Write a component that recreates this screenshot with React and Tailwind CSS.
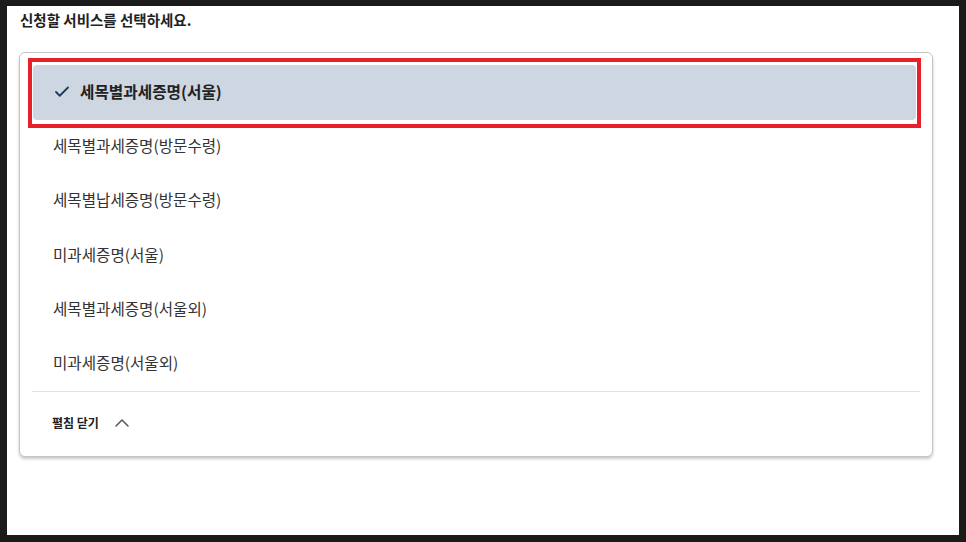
import React from 'react';
import { Check, ChevronUp } from 'lucide-react';

const items = [
  '세목별과세증명(방문수령)',
  '세목별납세증명(방문수령)',
  '미과세증명(서울)',
  '세목별과세증명(서울외)',
  '미과세증명(서울외)',
];

const font = { fontFamily: '"Noto Sans CJK KR", "Noto Sans", sans-serif' };

const App = () => {
  return (
    <div className="w-[966px] h-[542px] bg-[#1b1b1b] pt-[6px] pl-[7px] pr-[7px] pb-[7px]" style={font}>
      <div className="h-[529px] bg-white pl-[12px] pr-[26px]">
        <h1 className="pt-[4px] pl-[1px] text-[14.5px] leading-[20px] font-bold text-[#222]">
          신청할 서비스를 선택하세요.
        </h1>

        {/* 서비스 목록 카드 */}
        <div className="mt-[22px] rounded-md border border-[#c6c6c6] bg-white px-[12px] pt-[12px] shadow-[0_2px_3px_rgba(0,0,0,0.22)]">
          <div className="relative h-[54.4px]">
            <div className="ml-[1px] mr-[4px] h-[55px] rounded-[4px] bg-[#cdd6e1] flex items-center pl-[20px] pb-[2px]">
              <Check size={18} strokeWidth={2.4} className="text-[#1f3a60]" />
              <span className="ml-[9px] text-[15.7px] font-bold text-[#222]">세목별과세증명(서울)</span>
            </div>
            {/* 선택 강조 표시 */}
            <div className="absolute -left-[4px] -top-[7px] w-[893px] h-[70px] border-[4px] border-[#e8202a] pointer-events-none" />
          </div>

          {items.map((label) => (
            <div key={label} className="h-[54.4px] flex items-center pl-[21px] pb-[2px] text-[15.6px] text-[#333]">
              {label}
            </div>
          ))}

          <div className="border-t border-[#e2e2e2] h-[65px] flex items-center pl-[20px] pb-[3px]">
            <span className="text-[12px] font-bold text-[#222]">펼침 닫기</span>
            <ChevronUp size={24} strokeWidth={1.5} className="ml-[11px] text-[#555]" />
          </div>
        </div>
      </div>
    </div>
  );
};

export default App;
